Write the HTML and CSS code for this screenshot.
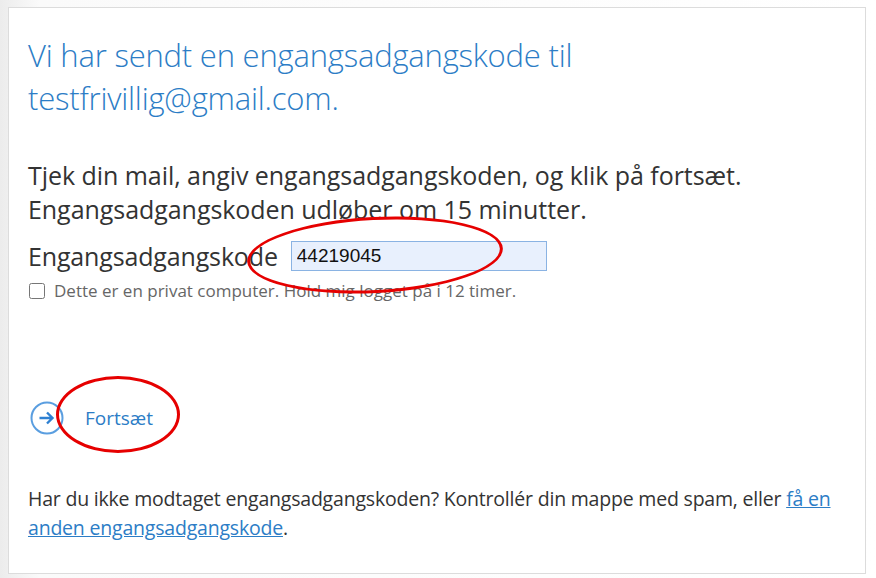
FILE: index.html
```html
<!DOCTYPE html>
<html lang="da">
<head>
  <meta charset="UTF-8">
  <title>Engangsadgangskode</title>
  <link rel="stylesheet" href="styles.css">
</head>
<body>
  <div class="page">
    <div class="card">
      <h1 class="title">Vi har sendt en engangsadgangskode til testfrivillig@gmail.com.</h1>

      <p class="intro">Tjek din mail, angiv engangsadgangskoden, og klik på fortsæt.<br>Engangsadgangskoden udløber om 15 minutter.</p>

      <div class="field">
        <label for="kode">Engangsadgangskode</label>
        <input type="text" id="kode" value="44219045">
        <span class="mark mark-code"></span>
      </div>

      <label class="remember">
        <input type="checkbox">
        <span>Dette er en privat computer. Hold mig logget på i 12 timer.</span>
      </label>

      <div class="actions">
        <a class="next" href="#">
          <svg width="34" height="34" viewBox="0 0 34 34">
            <circle cx="17" cy="17" r="15.5" fill="none" stroke="#5a9ee0" stroke-width="2"/>
            <path d="M9.5 17h13M17 11.5l5.5 5.5-5.5 5.5" fill="none" stroke="#2e80d2" stroke-width="2.4"/>
          </svg>
          <span>Fortsæt</span>
        </a>
        <span class="mark mark-next"></span>
      </div>

      <p class="help">Har du ikke modtaget engangsadgangskoden? Kontrollér din mappe med spam, eller <a href="#">få en anden engangsadgangskode</a>.</p>
    </div>
  </div>
</body>
</html>
```

FILE: styles.css
```css
* {
  box-sizing: border-box;
  margin: 0;
  padding: 0;
}

body {
  font-family: 'Open Sans', 'Liberation Sans', sans-serif;
  background: linear-gradient(to right, #ececec, #fafafa 40px, #ffffff);
  color: #333;
}

.page {
  padding: 7px 10px 4px 8px;
}

.card {
  background: #fff;
  border: 1px solid #dcdcdc;
  height: 567px;
  padding: 26px 19px 0 19px;
}

.title {
  font-weight: 300;
  font-size: 31px;
  line-height: 43px;
  color: #2c7dc6;
  width: 640px;
  letter-spacing: -0.2px;
}

.intro {
  margin-top: 38px;
  font-size: 25px;
  line-height: 34px;
  color: #333;
  letter-spacing: -0.05px;
}

.field {
  position: relative;
  display: flex;
  align-items: center;
  margin-top: 13px;
}

.field label {
  font-size: 25px;
  color: #333;
  letter-spacing: -0.15px;
}

.field input {
  margin-left: 13px;
  width: 256px;
  height: 30px;
  border: 1px solid #8ab3e3;
  background: #e8f0fd;
  font-family: 'Liberation Sans', Arial, sans-serif;
  font-size: 19px;
  padding: 0 5px;
  color: #111;
}

.remember {
  display: flex;
  align-items: center;
  margin-top: 7px;
  font-size: 17px;
  line-height: 22px;
  color: #666;
}

.remember input {
  width: 16px;
  height: 16px;
  margin: 0 9px 0 1px;
}

.actions {
  position: relative;
  margin-top: 99px;
  height: 34px;
}

.next {
  display: flex;
  align-items: center;
  text-decoration: none;
  color: #2c7dc6;
  font-size: 19px;
}

.next svg {
  margin-left: 2px;
}

.next span {
  margin-left: 21px;
}

.help {
  margin-top: 49px;
  font-size: 19.5px;
  line-height: 29px;
  color: #333;
  letter-spacing: -0.2px;
}

.help a {
  color: #2c7dc6;
}

/* røde markeringer */
.mark {
  position: absolute;
  border: 3px solid #e60000;
  border-radius: 50%;
}

.mark-code {
  left: 219px;
  top: -22px;
  width: 256px;
  height: 76px;
  transform: rotate(-3deg);
}

.mark-next {
  left: 28px;
  top: -25px;
  width: 124px;
  height: 77px;
}
```
